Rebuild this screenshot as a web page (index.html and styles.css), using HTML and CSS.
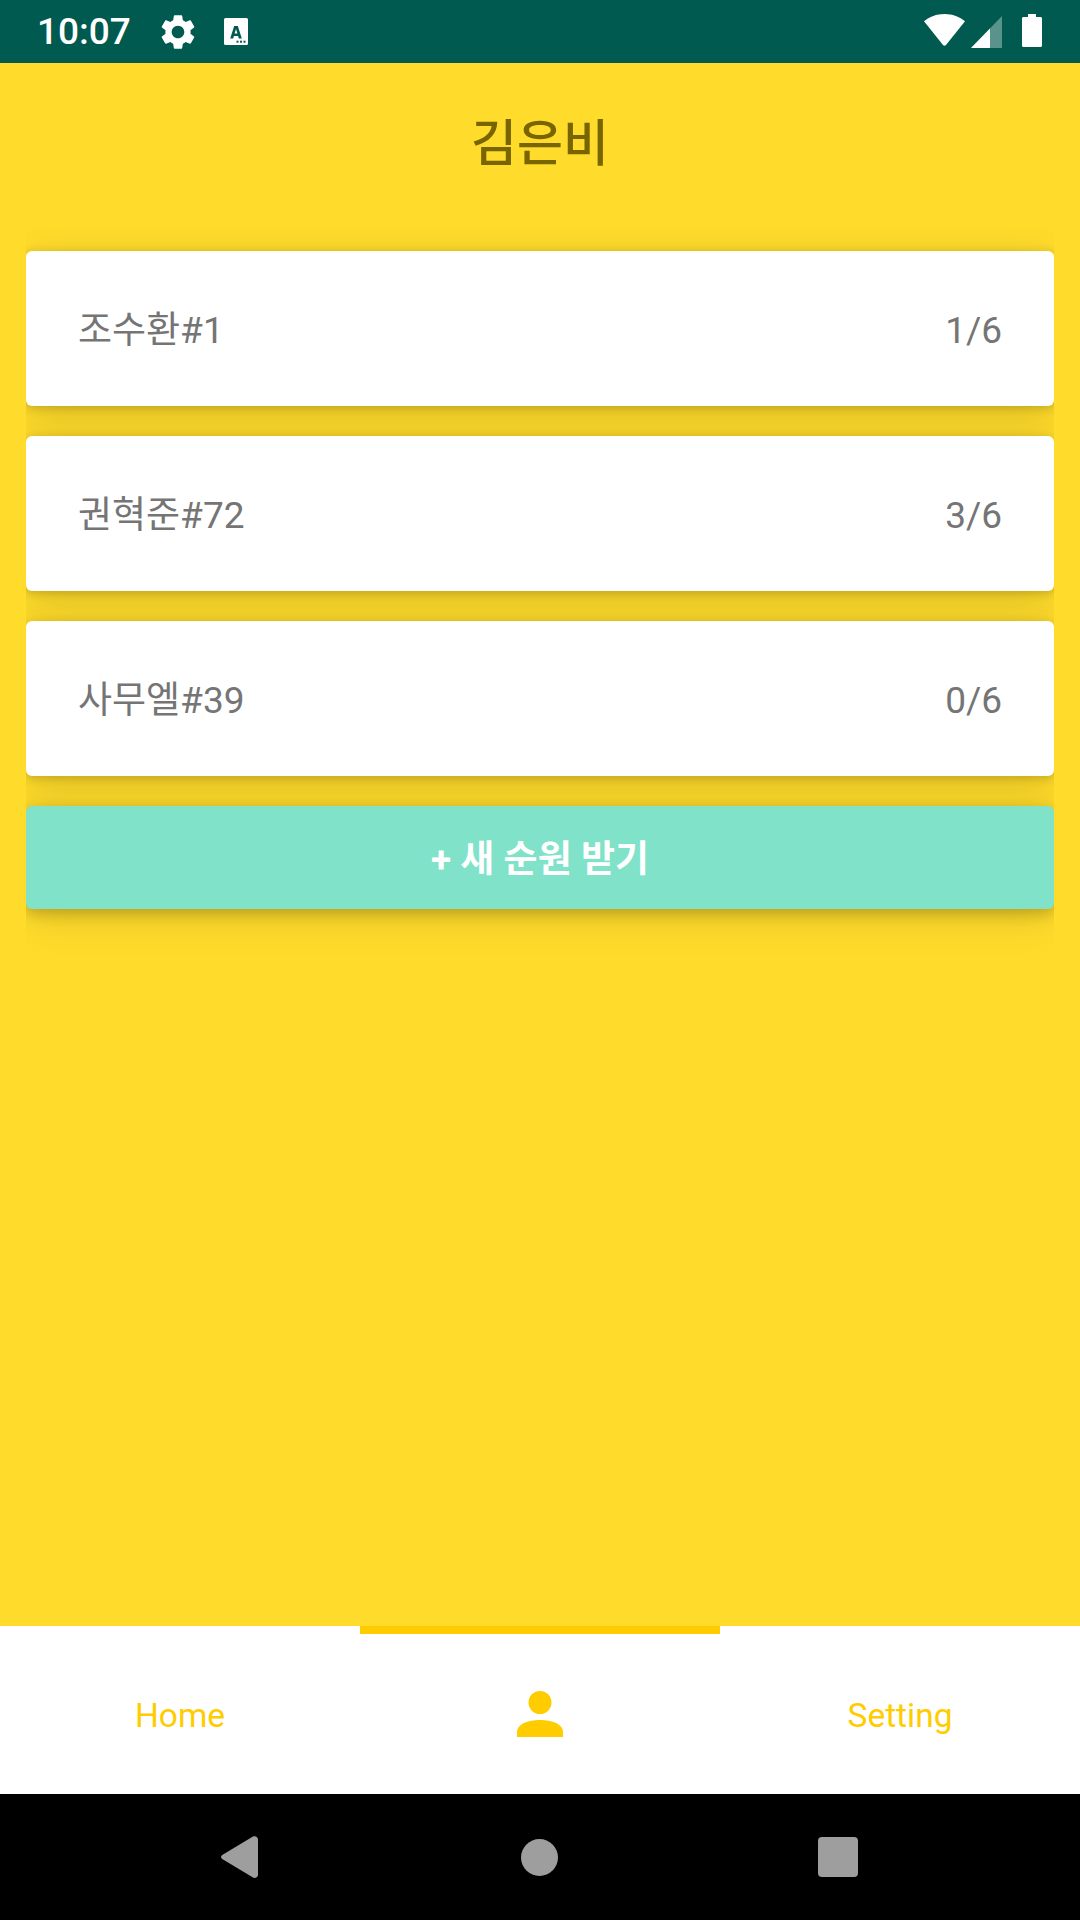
FILE: index.html
```html
<!DOCTYPE html>
<html lang="ko">
<head>
  <meta charset="UTF-8" />
  <meta name="viewport" content="width=device-width, initial-scale=1.0"/>
  <title>김은비</title>
  <link rel="stylesheet" href="styles.css">
</head>
<body>
  <div class="status-bar">
    <div class="status-left">
      <span class="time">10:07</span>
      <svg class="icon-gear" viewBox="0 0 24 24"><path fill="#fff" d="M19.14 12.94c.04-.3.06-.61.06-.94 0-.32-.02-.64-.07-.94l2.03-1.58c.18-.14.23-.41.12-.61l-1.92-3.32c-.12-.22-.37-.29-.59-.22l-2.39.96c-.5-.38-1.03-.7-1.62-.94l-.36-2.54c-.04-.24-.24-.41-.48-.41h-3.84c-.24 0-.43.17-.47.41l-.36 2.54c-.59.24-1.13.57-1.62.94l-2.39-.96c-.22-.08-.47 0-.59.22L2.74 8.87c-.12.21-.08.47.12.61l2.03 1.58c-.05.3-.09.63-.09.94s.02.64.07.94l-2.03 1.58c-.18.14-.23.41-.12.61l1.92 3.32c.12.22.37.29.59.22l2.39-.96c.5.38 1.03.7 1.62.94l.36 2.54c.05.24.24.41.48.41h3.84c.24 0 .44-.17.47-.41l.36-2.54c.59-.24 1.13-.56 1.62-.94l2.39.96c.22.08.47 0 .59-.22l1.92-3.32c.12-.22.07-.47-.12-.61l-2.01-1.58zM12 15.6c-1.98 0-3.6-1.62-3.6-3.6s1.62-3.6 3.6-3.6 3.6 1.62 3.6 3.6-1.62 3.6-3.6 3.6z"/></svg>
      <svg class="icon-a" viewBox="0 0 24 27">
        <rect width="24" height="27" rx="1.5" fill="#fff"/>
        <path fill="#005a4f" d="M10.2 8h3.6l4 12.5h-3l-.7-2.4H9.9l-.7 2.4h-3zM10.6 15.6h2.8L12 11z"/>
        <rect x="12.5" y="22.7" width="2" height="2" fill="#005a4f"/>
        <rect x="16" y="22.7" width="2" height="2" fill="#005a4f"/>
        <rect x="19.5" y="22.7" width="2" height="2" fill="#005a4f"/>
      </svg>
    </div>
    <div class="status-right">
      <svg class="icon-wifi" viewBox="0 0 41 32"><path fill="#fff" d="M20.5 0C12.5 0 5.5 2.8 0 7.2L19 31c.8 1 2.2 1 3 0L41 7.2C35.5 2.8 28.5 0 20.5 0z"/></svg>
      <svg class="icon-signal" viewBox="0 0 31 32">
        <path fill="#fff" fill-opacity=".35" d="M31 0v32H0z"/>
        <path fill="#fff" d="M19 12.4V32H0z"/>
      </svg>
      <svg class="icon-battery" viewBox="0 0 20 33"><path fill="#fff" d="M6 0h8v3h4.5c.8 0 1.5.7 1.5 1.5v27c0 .8-.7 1.5-1.5 1.5h-17C.7 33 0 32.3 0 31.5v-27C0 3.7.7 3 1.5 3H6z"/></svg>
    </div>
  </div>

  <main class="content">
    <h1 class="title">김은비</h1>
    <div class="list">
      <div class="card">
        <span>조수환#1</span>
        <span>1/6</span>
      </div>
      <div class="card">
        <span>권혁준#72</span>
        <span>3/6</span>
      </div>
      <div class="card">
        <span>사무엘#39</span>
        <span>0/6</span>
      </div>
      <button class="new-btn" type="button">+ 새 순원 받기</button>
    </div>
  </main>

  <nav class="tabs">
    <div class="tab">Home</div>
    <div class="tab active">
      <svg class="icon-person" viewBox="0 0 46 46">
        <circle cx="23" cy="11.5" r="11.5" fill="#ffcc00"/>
        <path fill="#ffcc00" d="M0 46v-5c0-8 11-12 23-12s23 4 23 12v5z"/>
      </svg>
    </div>
    <div class="tab">Setting</div>
  </nav>

  <div class="system-nav">
    <svg class="nav-btn" viewBox="0 0 40 42"><path fill="#9e9e9e" d="M1.2 19 32 .6c2-1.2 5 0 5 3v35c0 3-3 4.1-5 3L1.2 23c-1.6-1-1.6-3 0-4z"/></svg>
    <span class="nav-circle"></span>
    <span class="nav-square"></span>
  </div>
</body>
</html>
```

FILE: styles.css
```css
* {
  box-sizing: border-box;
}

body {
  margin: 0;
  width: 1080px;
  height: 1920px;
  display: flex;
  flex-direction: column;
  font-family: Roboto, "Noto Sans CJK KR", sans-serif;
  background: #ffdc2b;
  overflow: hidden;
}

svg {
  display: block;
}

.status-bar {
  height: 63px;
  background: #005a4f;
  display: flex;
  justify-content: space-between;
  align-items: center;
  padding: 0 38px 0 37px;
  flex-shrink: 0;
}

.status-left,
.status-right {
  display: flex;
  align-items: center;
}

.time {
  color: #fff;
  font-size: 37px;
  font-weight: 500;
  width: 120px;
}

.icon-gear {
  width: 42px;
  height: 42px;
}

.icon-a {
  width: 24px;
  height: 27px;
  margin-left: 25px;
}

.icon-wifi {
  width: 41px;
  height: 32px;
  margin-bottom: 3px;
}

.icon-signal {
  width: 31px;
  height: 32px;
  margin-left: 6px;
}

.icon-battery {
  width: 20px;
  height: 33px;
  margin-left: 20px;
  margin-bottom: 2px;
}

.content {
  flex: 1;
}

.title {
  margin: 0;
  height: 162px;
  line-height: 162px;
  text-align: center;
  font-size: 50px;
  font-weight: 500;
  color: #786500;
}

.list {
  margin: 0 26px;
  padding: 26px 0 56px;
  display: flex;
  flex-direction: column;
  gap: 30px;
  overflow: hidden;
}

.card {
  height: 155px;
  padding: 4px 52px 0;
  display: flex;
  justify-content: space-between;
  align-items: center;
  background: #fff;
  border-radius: 6px;
  font-size: 37px;
  line-height: 44px;
  color: #757575;
  box-shadow: 0 2px 10px rgba(0, 0, 0, 0.18), 0 8px 40px rgba(0, 0, 0, 0.14);
}

.new-btn {
  height: 103px;
  border: none;
  padding: 0 0 4px;
  background: #80e2c8;
  border-radius: 6px;
  color: #fff;
  font-family: inherit;
  font-size: 37px;
  font-weight: 700;
  box-shadow: 0 4px 14px rgba(0, 0, 0, 0.2), 0 8px 40px rgba(0, 0, 0, 0.14);
}

.tabs {
  height: 168px;
  background: #fff;
  display: flex;
  flex-shrink: 0;
}

.tab {
  flex: 1;
  display: flex;
  align-items: center;
  justify-content: center;
  padding-top: 2px;
  color: #ffcc00;
  font-size: 33.5px;
  border-top: 8px solid transparent;
}

.tab.active {
  padding-top: 0;
  border-top-color: #ffcc00;
}

.icon-person {
  width: 46px;
  height: 46px;
}

.system-nav {
  height: 126px;
  background: #000;
  display: flex;
  justify-content: center;
  align-items: center;
  gap: 260px;
  padding-right: 2px;
  flex-shrink: 0;
}

.nav-btn {
  width: 40px;
  height: 42px;
}

.nav-circle {
  width: 37px;
  height: 37px;
  border-radius: 50%;
  background: #9e9e9e;
}

.nav-square {
  width: 40px;
  height: 40px;
  border-radius: 4px;
  background: #9e9e9e;
}
```
